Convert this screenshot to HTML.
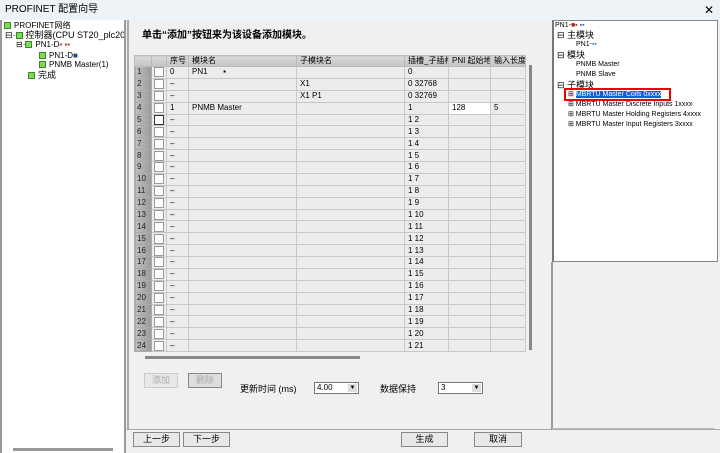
<!DOCTYPE html><html><head><meta charset="utf-8"><style>
*{margin:0;padding:0;box-sizing:border-box}
body{width:720px;height:453px;overflow:hidden;background:#f0f0f0;font-family:"Liberation Sans","Noto Sans CJK SC",sans-serif;font-size:9px;color:#000;position:relative}
.a{position:absolute;line-height:10px;white-space:nowrap}
#title{left:0;top:0;width:720px;height:20px;background:#eef3f8;font-size:10px;line-height:20px;padding-left:5px}
#left{left:0;top:20px;width:126px;height:433px;background:#fff;border-left:2px solid #999;border-right:2px solid #999;overflow:hidden}
#right{left:552px;top:20px;width:166px;height:242px;background:#fff;border:1px solid #888;border-left:2px solid #777;overflow:hidden}
.g{display:inline-block;width:7px;height:7px;background:#7ed957;border:1px solid #3a8a2a;vertical-align:middle;margin-right:3px}
table{position:absolute;left:134px;top:55px;width:391px;border-collapse:collapse;table-layout:fixed}
td{border:1px solid #c8c8c8;height:11.875px;padding:0 3px;font-size:8px;line-height:10px;white-space:nowrap;overflow:hidden;background:#ececec}
tr.h td{height:11px;background:linear-gradient(#d8d8d8,#c4c4c4);border-color:#bbb}
td.n{background:linear-gradient(90deg,#c0c0c0,#9a9a9a);color:#222;border-color:#aaa;padding:0 2px}
td.c{background:#ececec;padding:0 2px}
td.c i{display:block;width:10px;height:10px;background:#fff;border:1px solid #999}
.btn{position:absolute;height:15px;border:1px solid #888;background:#e8e8e8;text-align:center;font-size:9px;line-height:13px}
.sel{position:absolute;height:12px;border:1px solid #777;background:#fff;font-size:8px;line-height:10px;padding-left:2px}
.sel b{position:absolute;right:1px;top:1px;width:9px;height:8px;background:#ddd;font-size:6px;line-height:8px;text-align:center;font-weight:normal}
</style></head><body>
<div id="title" class="a" style="line-height:20px">PROFINET 配置向导<span style="position:absolute;right:6px;font-size:12px">✕</span></div>
<div id="left" class="a">
<div class="a" style="left:2px;top:1px;font-size:8px"><span class="g"></span>PROFINET网络</div>
<div class="a" style="left:3px;top:10px;font-size:9px">⊟·<span class="g"></span>控制器(CPU ST20_plc200smart)</div>
<div class="a" style="left:14px;top:20px;font-size:8px">⊟·<span class="g"></span>PN1-D<span style="color:#c33">▪ ▪▪</span></div>
<div class="a" style="left:37px;top:31px;font-size:8px"><span class="g"></span>PN1-D<span style="color:#248">■</span></div>
<div class="a" style="left:37px;top:40px;font-size:8px"><span class="g"></span>PNMB Master(1)</div>
<div class="a" style="left:26px;top:50px;font-size:9px"><span class="g"></span>完成</div>
<div class="a" style="left:11px;top:428px;width:100px;height:3px;background:#999"></div>
</div>
<div class="a" style="left:127px;top:20px;width:2px;height:410px;background:#aaa"></div>
<div class="a" style="left:142px;top:30px;font-size:10px;font-weight:bold;line-height:12px">单击“添加”按钮来为该设备添加模块。</div>
<table>
<colgroup><col style="width:17px"><col style="width:15px"><col style="width:22px"><col style="width:108px"><col style="width:108px"><col style="width:44px"><col style="width:42px"><col style="width:35px"></colgroup>
<tr class="h"><td></td><td></td><td>序号</td><td>模块名</td><td>子模块名</td><td>插槽_子插槽</td><td>PNI 起始地...</td><td>输入长度 (</td></tr>
<tr><td class="n">1</td><td class="c"><i></i></td><td>0</td><td>PN1 &nbsp; &nbsp; &nbsp; ▪</td><td></td><td>0</td><td></td><td></td></tr>
<tr><td class="n">2</td><td class="c"><i></i></td><td>–</td><td></td><td>X1</td><td>0 32768</td><td></td><td></td></tr>
<tr><td class="n">3</td><td class="c"><i></i></td><td>–</td><td></td><td>X1 P1</td><td>0 32769</td><td></td><td></td></tr>
<tr><td class="n">4</td><td class="c"><i></i></td><td>1</td><td>PNMB Master</td><td></td><td>1</td><td style="background:#fff">128</td><td>5</td></tr>
<tr><td class="n">5</td><td class="c"><i style="border:1px solid #333"></i></td><td>–</td><td></td><td></td><td>1 2</td><td></td><td></td></tr>
<tr><td class="n">6</td><td class="c"><i></i></td><td>–</td><td></td><td></td><td>1 3</td><td></td><td></td></tr>
<tr><td class="n">7</td><td class="c"><i></i></td><td>–</td><td></td><td></td><td>1 4</td><td></td><td></td></tr>
<tr><td class="n">8</td><td class="c"><i></i></td><td>–</td><td></td><td></td><td>1 5</td><td></td><td></td></tr>
<tr><td class="n">9</td><td class="c"><i></i></td><td>–</td><td></td><td></td><td>1 6</td><td></td><td></td></tr>
<tr><td class="n">10</td><td class="c"><i></i></td><td>–</td><td></td><td></td><td>1 7</td><td></td><td></td></tr>
<tr><td class="n">11</td><td class="c"><i></i></td><td>–</td><td></td><td></td><td>1 8</td><td></td><td></td></tr>
<tr><td class="n">12</td><td class="c"><i></i></td><td>–</td><td></td><td></td><td>1 9</td><td></td><td></td></tr>
<tr><td class="n">13</td><td class="c"><i></i></td><td>–</td><td></td><td></td><td>1 10</td><td></td><td></td></tr>
<tr><td class="n">14</td><td class="c"><i></i></td><td>–</td><td></td><td></td><td>1 11</td><td></td><td></td></tr>
<tr><td class="n">15</td><td class="c"><i></i></td><td>–</td><td></td><td></td><td>1 12</td><td></td><td></td></tr>
<tr><td class="n">16</td><td class="c"><i></i></td><td>–</td><td></td><td></td><td>1 13</td><td></td><td></td></tr>
<tr><td class="n">17</td><td class="c"><i></i></td><td>–</td><td></td><td></td><td>1 14</td><td></td><td></td></tr>
<tr><td class="n">18</td><td class="c"><i></i></td><td>–</td><td></td><td></td><td>1 15</td><td></td><td></td></tr>
<tr><td class="n">19</td><td class="c"><i></i></td><td>–</td><td></td><td></td><td>1 16</td><td></td><td></td></tr>
<tr><td class="n">20</td><td class="c"><i></i></td><td>–</td><td></td><td></td><td>1 17</td><td></td><td></td></tr>
<tr><td class="n">21</td><td class="c"><i></i></td><td>–</td><td></td><td></td><td>1 18</td><td></td><td></td></tr>
<tr><td class="n">22</td><td class="c"><i></i></td><td>–</td><td></td><td></td><td>1 19</td><td></td><td></td></tr>
<tr><td class="n">23</td><td class="c"><i></i></td><td>–</td><td></td><td></td><td>1 20</td><td></td><td></td></tr>
<tr><td class="n">24</td><td class="c"><i></i></td><td>–</td><td></td><td></td><td>1 21</td><td></td><td></td></tr>
</table>
<div class="a" style="left:529px;top:65px;width:3px;height:285px;background:#888"></div>
<div class="a" style="left:145px;top:356px;width:215px;height:3px;background:#888"></div>
<div class="btn" style="left:144px;top:373px;width:34px;color:#aaa;border-color:#ccc">添加</div>
<div class="btn" style="left:188px;top:373px;width:34px;color:#aaa;background:#ddd">删除</div>
<div class="a" style="left:240px;top:384px;font-size:9px">更新时间 (ms)</div>
<div class="sel" style="left:314px;top:382px;width:45px">4.00<b>▼</b></div>
<div class="a" style="left:380px;top:384px;font-size:9px">数据保持</div>
<div class="sel" style="left:438px;top:382px;width:45px">3<b>▼</b></div>
<div class="a" style="left:126px;top:429px;width:594px;height:1px;background:#aaa"></div>
<div class="btn" style="left:133px;top:432px;width:47px">上一步</div>
<div class="btn" style="left:183px;top:432px;width:47px">下一步</div>
<div class="btn" style="left:401px;top:432px;width:47px">生成</div>
<div class="btn" style="left:474px;top:432px;width:48px">取消</div>
<div id="right" class="a">
<div class="a" style="left:1px;top:0px;font-size:7px">PN1-<span style="color:#a22">■▪</span> <span style="color:#36c">▪▪</span></div>
<div class="a" style="left:3px;top:9px;font-size:9px">⊟ 主模块</div>
<div class="a" style="left:22px;top:19px;font-size:7px">PN1-<span style="color:#39c">▪▪</span></div>
<div class="a" style="left:3px;top:29px;font-size:9px">⊟ 模块</div>
<div class="a" style="left:22px;top:39px;font-size:7px">PNMB Master</div>
<div class="a" style="left:22px;top:49px;font-size:7px">PNMB Slave</div>
<div class="a" style="left:3px;top:59px;font-size:9px">⊟ 子模块</div>
<div class="a" style="left:10px;top:67px;width:107px;height:13px;border:2px solid #e00"></div>
<div class="a" style="left:14px;top:69px;font-size:7px">⊞ <span style="background:#0a64d8;color:#fff">MBRTU Master Coils 0xxxx</span></div>
<div class="a" style="left:14px;top:79px;font-size:7px">⊞ MBRTU Master Discrete Inputs 1xxxx</div>
<div class="a" style="left:14px;top:89px;font-size:7px">⊞ MBRTU Master Holding Registers 4xxxx</div>
<div class="a" style="left:14px;top:99px;font-size:7px">⊞ MBRTU Master Input Registers 3xxxx</div>
</div>
<div class="a" style="left:551px;top:262px;width:2px;height:167px;background:#999"></div>
<div class="a" style="left:552px;top:428px;width:162px;height:1px;background:#bbb"></div>
</body></html>
